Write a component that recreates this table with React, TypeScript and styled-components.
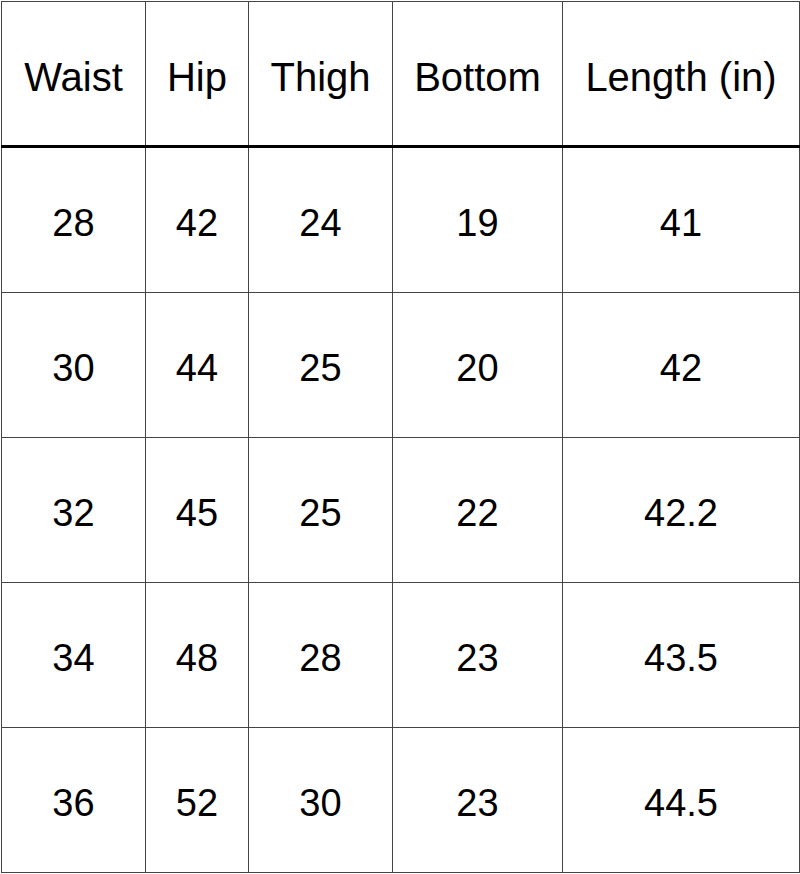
import React from 'react'
import styled, { createGlobalStyle } from 'styled-components'

const GlobalStyle = createGlobalStyle`
  html, body {
    margin: 0;
    padding: 0;
    background: #ffffff;
  }
  body {
    font-family: 'Liberation Sans', Arial, Helvetica, sans-serif;
  }
`

const Page = styled.div`
  padding: 1px 0 0 1px;
  width: 800px;
  box-sizing: border-box;
`

const Table = styled.table`
  border-collapse: collapse;
  table-layout: fixed;
  width: 798px;
  color: #000;
`

const HeadCell = styled.th`
  height: 135px;
  padding: 8px 0 0;
  border: 1px solid #444;
  border-bottom: 3px solid #000;
  font-size: 40px;
  font-weight: 400;
  text-align: center;
  vertical-align: middle;
`

const Cell = styled.td`
  height: 138px;
  padding: 6px 0 0;
  border: 1px solid #444;
  font-size: 38px;
  text-align: center;
  vertical-align: middle;
`

const columns = [
  { label: 'Waist', width: 144 },
  { label: 'Hip', width: 103 },
  { label: 'Thigh', width: 144 },
  { label: 'Bottom', width: 170 },
  { label: 'Length (in)', width: 237 },
]

const rows = [
  ['28', '42', '24', '19', '41'],
  ['30', '44', '25', '20', '42'],
  ['32', '45', '25', '22', '42.2'],
  ['34', '48', '28', '23', '43.5'],
  ['36', '52', '30', '23', '44.5'],
]

const App: React.FC = () => {
  return (
    <Page>
      <GlobalStyle />
      <Table>
        <colgroup>
          {columns.map((c) => (
            <col key={c.label} style={{ width: c.width }} />
          ))}
        </colgroup>
        <thead>
          <tr>
            {columns.map((c) => (
              <HeadCell key={c.label}>{c.label}</HeadCell>
            ))}
          </tr>
        </thead>
        <tbody>
          {rows.map((r, i) => (
            <tr key={i}>
              {r.map((v, j) => (
                <Cell key={j}>{v}</Cell>
              ))}
            </tr>
          ))}
        </tbody>
      </Table>
    </Page>
  )
}

export default App
